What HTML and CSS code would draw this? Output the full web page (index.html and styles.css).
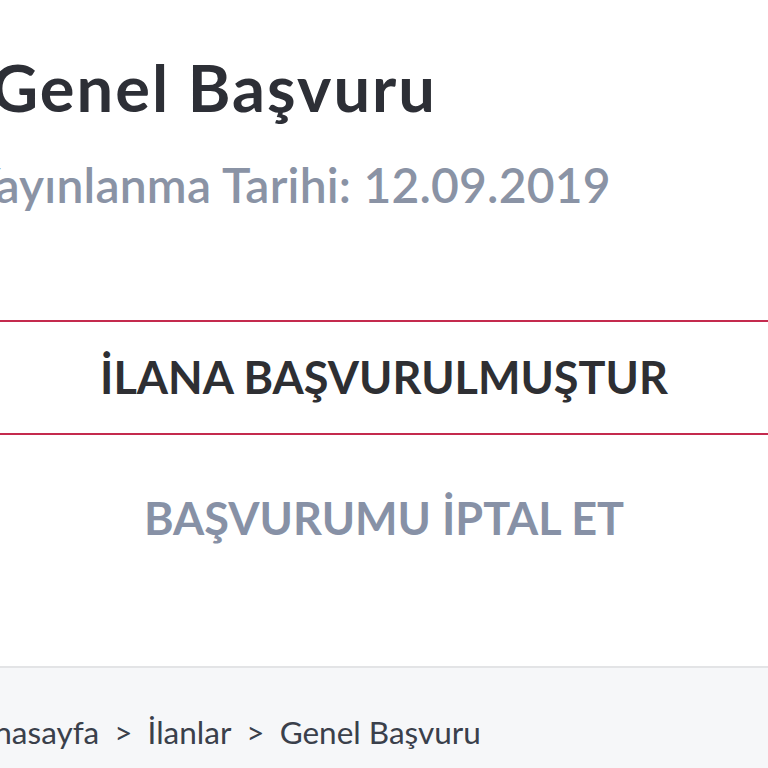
FILE: index.html
```html
<!DOCTYPE html>
<html lang="tr">
<head>
<meta charset="utf-8">
<title>Genel Başvuru</title>
<link rel="stylesheet" href="styles.css">
</head>
<body>
<main class="page">
  <header class="head">
    <h1 class="title">Genel Başvuru</h1>
    <p class="date">Yayınlanma Tarihi: 12.09.2019</p>
  </header>
  <div class="status">İLANA BAŞVURULMUŞTUR</div>
  <div class="actions">
    <button class="cancel" type="button">BAŞVURUMU İPTAL ET</button>
  </div>
  <nav class="crumbs">
    <span>Anasayfa</span><span class="sep">&gt;</span><span>İlanlar</span><span class="sep">&gt;</span><span>Genel Başvuru</span>
  </nav>
</main>
</body>
</html>
```
FILE: styles.css
```css
html, body {
  margin: 0;
  padding: 0;
  background: #ffffff;
}
.page {
  width: 768px;
  height: 768px;
  overflow: hidden;
  display: flex;
  flex-direction: column;
  font-family: Lato, "Noto Sans", sans-serif;
}
.head {
  padding-top: 47px;
  display: flex;
  flex-direction: column;
}
.title {
  margin: 0 0 0 -9px;
  font-size: 65px;
  line-height: 80px;
  font-weight: 700;
  letter-spacing: 2px;
  color: #2d2f36;
  white-space: nowrap;
}
.date {
  margin: 28px 0 0 -30px;
  font-size: 48px;
  line-height: 60px;
  font-weight: 600;
  letter-spacing: 0.2px;
  color: #8a93a5;
  white-space: nowrap;
}
.status {
  margin-top: 105px;
  border-top: 2px solid #c42a4e;
  border-bottom: 2px solid #c42a4e;
  height: 111px;
  line-height: 111px;
  text-align: center;
  font-size: 45px;
  font-weight: 700;
  color: #2e2f33;
  white-space: nowrap;
}
.actions {
  height: 231px;
  display: flex;
  justify-content: center;
  align-items: flex-start;
  border-bottom: 2px solid #e3e4e6;
}
.cancel {
  background: none;
  border: 0;
  padding: 0;
  font-family: inherit;
  font-size: 45px;
  line-height: 167px;
  font-weight: 700;
  color: #8791a6;
  white-space: nowrap;
}
.crumbs {
  flex: 1;
  background: #f6f7f9;
  padding-top: 44px;
  margin-left: -27px;
  display: flex;
  gap: 15px;
  font-size: 31.5px;
  line-height: 40px;
  color: #3a404b;
  white-space: nowrap;
}
```
